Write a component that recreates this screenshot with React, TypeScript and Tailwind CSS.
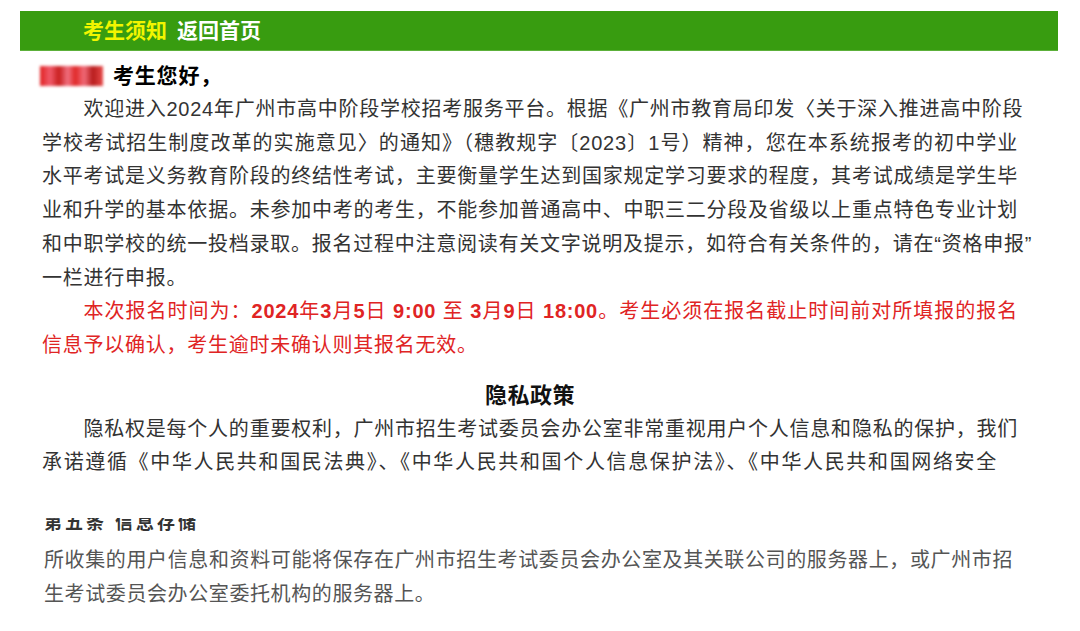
import React from "react";

const FONT = '"Liberation Sans", "Noto Sans CJK SC", sans-serif';

function Line({
  children,
  indent = false,
  justify = true,
  className = "",
}: {
  children: React.ReactNode;
  indent?: boolean;
  justify?: boolean;
  className?: string;
}) {
  return (
    <span
      className={`block whitespace-nowrap ${indent ? "indent-[41.5px]" : ""} ${
        justify ? "text-justify [text-align-last:justify]" : ""
      } ${className}`}
    >
      {children}
    </span>
  );
}

export default function App() {
  return (
    <div
      className="w-[1080px] h-[631px] overflow-hidden bg-white pt-[11px]"
      style={{ fontFamily: FONT }}
    >
      {/* Green header bar */}
      <div className="ml-[20px] mr-[22px] h-[40px] bg-[#389c10] flex items-center pl-[63px] gap-[10px] text-[21px] font-bold leading-none border-b border-[#5cb03a]">
        <span className="text-[#f2f500]">考生须知</span>
        <span className="text-white">返回首页</span>
      </div>

      {/* Greeting */}
      <div className="mt-[8px] ml-[40px] h-[34px] flex items-center gap-[10px]">
        <span className="inline-block w-[63px] h-[20px] blur-[1.5px] bg-[linear-gradient(90deg,#e02020_0%,#f05a6a_16%,#c81e1e_30%,#f07080_44%,#e02828_56%,#f06a78_70%,#b71c1c_84%,#e84a4a_100%)]" />
        <span className="text-[21px] font-bold text-black tracking-[0.8px]">
          考生您好，
        </span>
      </div>

      {/* Main paragraph */}
      <div className="pl-[42px] w-[1018px] text-[20px] leading-[33.7px] tracking-[0.75px] text-[#333]">
        <Line indent>
          欢迎进入2024年广州市高中阶段学校招考服务平台。根据《广州市教育局印发〈关于深入推进高中阶段
        </Line>
        <Line>
          学校考试招生制度改革的实施意见〉的通知》（穗教规字〔2023〕1号）精神，您在本系统报考的初中学业
        </Line>
        <Line>
          水平考试是义务教育阶段的终结性考试，主要衡量学生达到国家规定学习要求的程度，其考试成绩是学生毕
        </Line>
        <Line>
          业和升学的基本依据。未参加中考的考生，不能参加普通高中、中职三二分段及省级以上重点特色专业计划
        </Line>
        <Line>
          和中职学校的统一投档录取。报名过程中注意阅读有关文字说明及提示，如符合有关条件的，请在“资格申报”
        </Line>
        <Line justify={false}>一栏进行申报。</Line>

        <div className="text-[#e02424]">
          <Line indent>
            本次报名时间为：<b>2024</b>年<b>3</b>月<b>5</b>日 <b>9:00</b> 至{" "}
            <b>3</b>月<b>9</b>日 <b>18:00</b>。考生必须在报名截止时间前对所填报的报名
          </Line>
          <Line justify={false}>信息予以确认，考生逾时未确认则其报名无效。</Line>
        </div>

        <div className="mt-[16px] text-center text-[22px] font-bold text-[#111] leading-[34px] tracking-[0.5px]">
          隐私政策
        </div>

        <Line indent>
          隐私权是每个人的重要权利，广州市招生考试委员会办公室非常重视用户个人信息和隐私的保护，我们
        </Line>
        <Line className="w-[955px]">
          承诺遵循《中华人民共和国民法典》、《中华人民共和国个人信息保护法》、《中华人民共和国网络安全
        </Line>
      </div>

      {/* Lower cropped section */}
      <div className="ml-[44px] w-[969px] mt-[38px]">
        <div className="h-[14px] overflow-hidden flex items-end">
          <span className="block text-[18px] leading-[18px] font-bold tracking-[3px] text-[#333] whitespace-nowrap">
            第五条 信息存储
          </span>
        </div>
        <div className="mt-[12px] text-[20px] leading-[33.7px] tracking-[0.6px] text-[#555]">
          <Line>
            所收集的用户信息和资料可能将保存在广州市招生考试委员会办公室及其关联公司的服务器上，或广州市招
          </Line>
          <Line justify={false}>生考试委员会办公室委托机构的服务器上。</Line>
        </div>
      </div>
    </div>
  );
}
